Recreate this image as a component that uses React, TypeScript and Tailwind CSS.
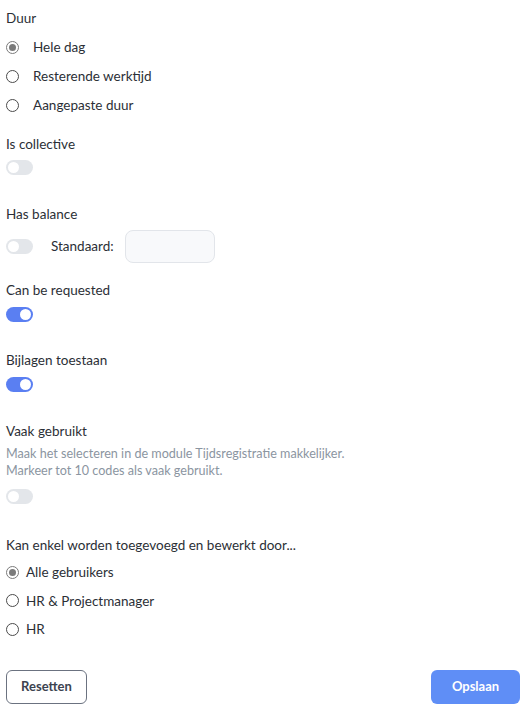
import React from "react";

function Radio({ checked, label, gap }: { checked?: boolean; label: string; gap: string }) {
  return (
    <div className={`flex items-center h-[29px] ${gap}`}>
      <span
        className={`w-[13px] h-[13px] rounded-full border flex items-center justify-center bg-white ${
          checked ? "border-[#7b7b7b]" : "border-[#4b4b4b]"
        }`}
      >
        {checked && <span className="w-[7px] h-[7px] rounded-full bg-[#7b7b7b]" />}
      </span>
      <span>{label}</span>
    </div>
  );
}

function Toggle({ on }: { on?: boolean }) {
  return (
    <div
      className={`w-[27px] h-[15px] rounded-full flex items-center px-[2px] ${
        on ? "bg-[#5a7ff2] justify-end" : "bg-[#e3e6ea] justify-start"
      }`}
    >
      <span className="w-[11px] h-[11px] rounded-full bg-white" />
    </div>
  );
}

export default function App() {
  return (
    <div
      className="w-[524px] h-[707px] bg-white text-[13.5px] text-[#2b2f36] pl-[6px] pr-[4px] pt-[8px] flex flex-col"
      style={{ fontFamily: "Lato, 'Noto Sans', sans-serif" }}
    >
      <div className="h-[20px] leading-[20px]">Duur</div>
      <div className="mt-[5px]">
        <Radio checked label="Hele dag" gap="gap-[14px]" />
        <Radio label="Resterende werktijd" gap="gap-[14px]" />
        <Radio label="Aangepaste duur" gap="gap-[14px]" />
      </div>

      <div className="mt-[14px] h-[20px] leading-[20px]">Is collective</div>
      <div className="mt-[6px]">
        <Toggle />
      </div>

      <div className="mt-[29px] h-[20px] leading-[20px]">Has balance</div>
      <div className="mt-[6px] flex items-center h-[33px]">
        <Toggle />
        <span className="ml-[18px]">Standaard:</span>
        <div className="ml-[11px] w-[90px] h-[33px] rounded-lg border border-[#e2e5ea] bg-[#f8f9fb]" />
      </div>

      <div className="mt-[17px] h-[20px] leading-[20px]">Can be requested</div>
      <div className="mt-[7px]">
        <Toggle on />
      </div>

      <div className="mt-[28px] h-[20px] leading-[20px]">Bijlagen toestaan</div>
      <div className="mt-[7px]">
        <Toggle on />
      </div>

      <div className="mt-[29px] h-[20px] leading-[20px]">Vaak gebruikt</div>
      <div className="mt-[4px] text-[12.6px] leading-[17px] text-[#8b95a1]">
        <div>Maak het selecteren in de module Tijdsregistratie makkelijker.</div>
        <div>Markeer tot 10 codes als vaak gebruikt.</div>
      </div>
      <div className="mt-[10px]">
        <Toggle />
      </div>

      <div className="mt-[31px] h-[20px] leading-[20px]">Kan enkel worden toegevoegd en bewerkt door...</div>
      <div className="mt-[3px] [&>div]:h-[28.5px]">
        <Radio checked label="Alle gebruikers" gap="gap-[7px]" />
        <Radio label="HR & Projectmanager" gap="gap-[7px]" />
        <Radio label="HR" gap="gap-[7px]" />
      </div>

      <div className="mt-[26px] flex justify-between">
        <button className="w-[81px] h-[34px] rounded-md border border-[#6b7280] bg-white text-[#3c4350] font-bold text-[13px]">
          Resetten
        </button>
        <button className="w-[89px] h-[34px] rounded-md bg-[#5f8ef6] text-white font-bold text-[13px]">
          Opslaan
        </button>
      </div>
    </div>
  );
}
